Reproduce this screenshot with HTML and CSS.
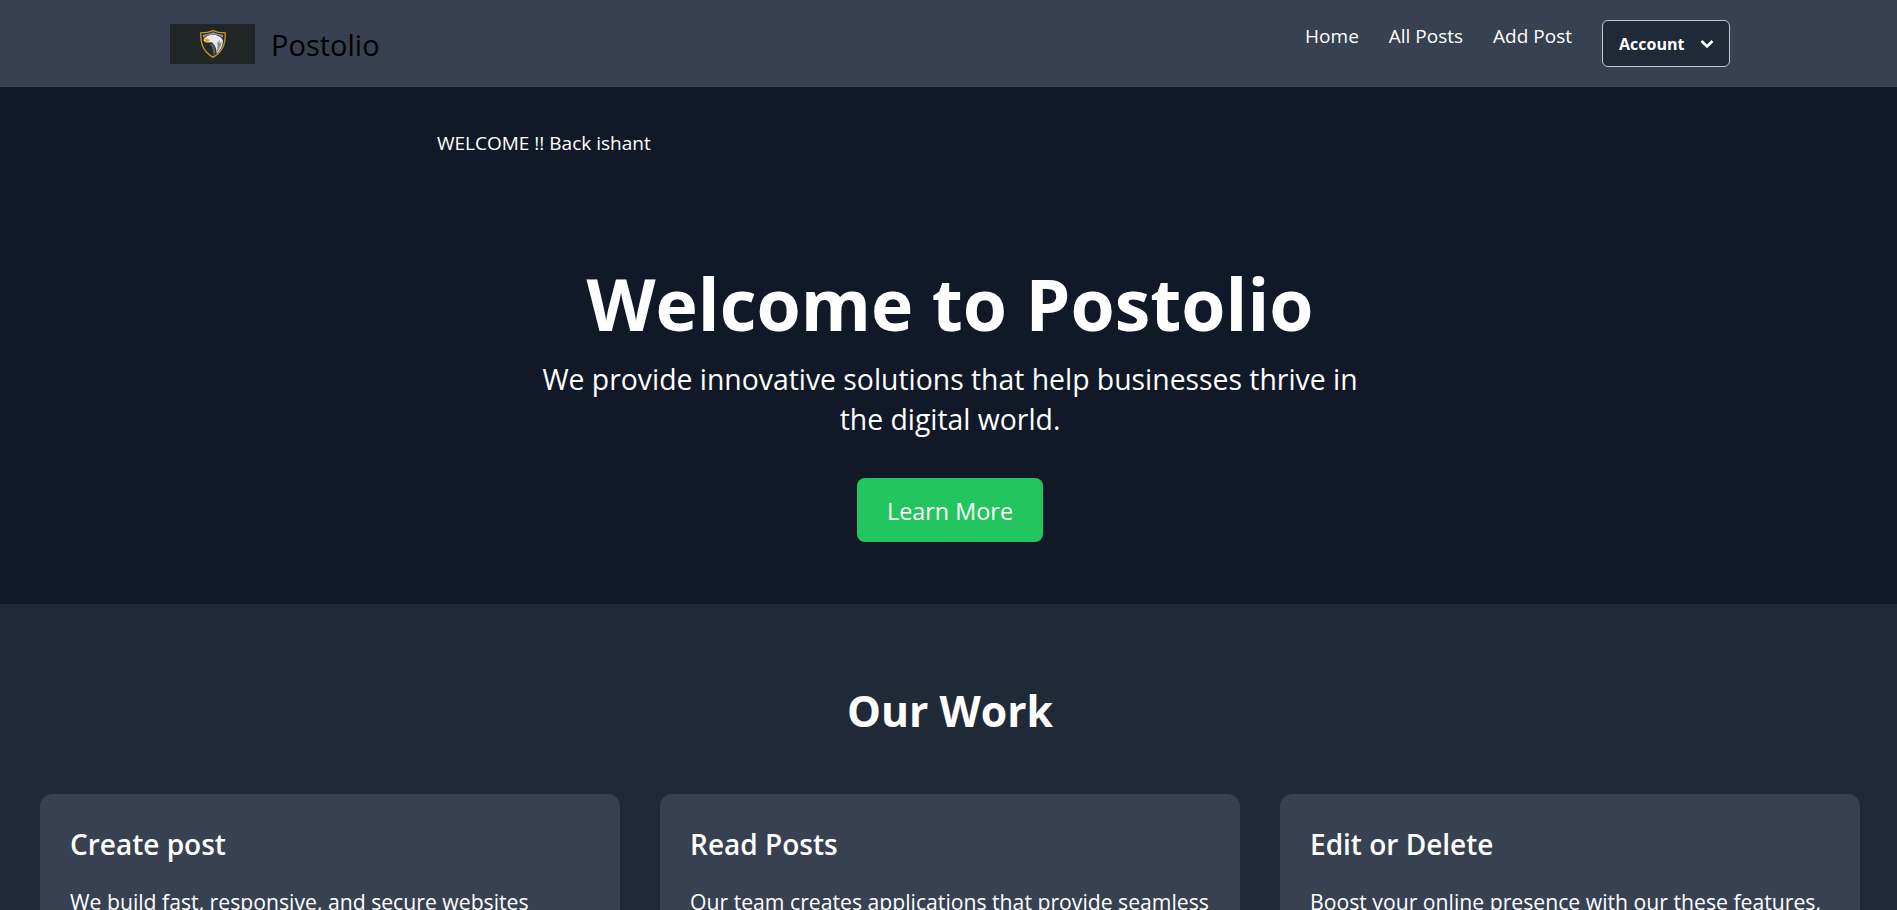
FILE: index.html
```html
<!DOCTYPE html>
<html lang="en">
<head>
    <meta charset="UTF-8">
    <meta name="viewport" content="width=device-width, initial-scale=1.0">
    <title>Postolio</title>
    <link rel="stylesheet" href="styles.css">
</head>
<body>
    <header class="site-header">
        <div class="brand">
            <div class="brand-logo">
                <svg width="26" height="28" viewBox="0 0 78 85">
                    <path d="M39 2 C50 7 64 9 76 9 C77 35 74 62 39 83 C4 62 1 35 2 9 C14 9 28 7 39 2Z" fill="#23282a" stroke="#c8952f" stroke-width="4"/>
                    <path d="M8 15 C22 13 30 10 39 7 C48 10 58 13 70 15 L69 24 C58 13 38 11 20 17 L9 24Z" fill="#8e9294"/>
                    <path d="M10 31 C16 17 34 12 50 16 C60 19 66 25 69 31 C70 46 62 62 50 71 C50 58 46 46 36 37 L22 38 L14 36Z" fill="#e9ebeb"/>
                    <path d="M36 40 C44 46 48 58 46 72 L40 77 C40 64 38 52 30 44Z" fill="#585c5e"/>
                    <path d="M50 32 C54 44 54 56 50 68 C58 60 64 48 66 34 L60 42 L58 28 L54 40Z" fill="#83888a"/>
                    <path d="M9 29 L22 26 L30 30 L24 37 L13 37 L16 33Z" fill="#eaa62c"/>
                </svg>
            </div>
            <span class="brand-name">Postolio</span>
        </div>
        <nav class="main-nav">
            <a href="#">Home</a>
            <a href="#">All Posts</a>
            <a href="#">Add Post</a>
            <button type="button" class="account-btn">
                Account
                <svg width="14" height="10" viewBox="0 0 14 10"><path d="M1.5 2 L7 7.5 L12.5 2" fill="none" stroke="#fff" stroke-width="2.6"/></svg>
            </button>
        </nav>
    </header>

    <section class="hero">
        <p class="greeting">WELCOME !! Back ishant</p>
        <div class="hero-body">
            <h1>Welcome to Postolio</h1>
            <p class="hero-text">We provide innovative solutions that help businesses thrive in the digital world.</p>
            <a href="#" class="hero-btn">Learn More</a>
        </div>
    </section>

    <section class="work">
        <h2>Our Work</h2>
        <div class="work-grid">
            <div class="work-card">
                <h3>Create post</h3>
                <p>We build fast, responsive, and secure websites tailored to your needs.</p>
            </div>
            <div class="work-card">
                <h3>Read Posts</h3>
                <p>Our team creates applications that provide seamless user experiences.</p>
            </div>
            <div class="work-card">
                <h3>Edit or Delete</h3>
                <p>Boost your online presence with our these features, anytime you want.</p>
            </div>
        </div>
    </section>
</body>
</html>
```

FILE: styles.css
```css
* {
    box-sizing: border-box;
}

body {
    margin: 0;
    font-family: 'Open Sans', sans-serif;
    background-color: #1f2937;
    color: #fff;
}

.site-header {
    height: 87px;
    padding: 20px 167px 20px 170px;
    background-color: #374151;
    display: flex;
    justify-content: space-between;
    align-items: flex-start;
}

.brand {
    display: flex;
    align-items: center;
    gap: 16px;
    height: 48px;
}

.brand-logo {
    width: 85px;
    height: 40px;
    background-color: #1f2625;
    display: flex;
    align-items: center;
    justify-content: center;
}

.brand-name {
    font-size: 29px;
    font-weight: 500;
    color: #000;
}

.main-nav {
    display: flex;
    align-items: flex-start;
    gap: 30px;
    font-size: 19px;
}

.main-nav a {
    color: #fff;
    text-decoration: none;
    line-height: 32px;
}

.account-btn {
    width: 128px;
    height: 47px;
    display: flex;
    align-items: center;
    justify-content: space-between;
    padding: 1px 15px 0 16px;
    background-color: #1f2937;
    color: #fff;
    border: 1px solid #c4c8ce;
    border-radius: 6px;
    font-family: inherit;
    font-size: 16px;
    font-weight: 700;
}

.hero {
    height: 517px;
    background-color: #111827;
    padding-top: 42px;
}

.greeting {
    margin: 0 0 0 437px;
    font-size: 19px;
    line-height: 28px;
}

.hero-body {
    margin-top: 111px;
    padding-left: 3px;
    text-align: center;
}

.hero h1 {
    margin: 0;
    font-size: 71.5px;
    line-height: 72px;
    font-weight: 700;
}

.hero-text {
    width: 840px;
    margin: 19px auto 39px;
    font-size: 28.35px;
    line-height: 40px;
}

.hero-btn {
    display: inline-block;
    padding: 17px 30px 15px;
    background-color: #22c55e;
    color: #fff;
    border-radius: 8px;
    font-size: 23.4px;
    line-height: 32px;
    text-decoration: none;
}

.work {
    padding: 78px 37px 78px 40px;
}

.work h2 {
    margin: 0 0 56px;
    padding-top: 1px;
    height: 56px;
    text-align: center;
    font-size: 42.7px;
    line-height: 56px;
    font-weight: 700;
}

.work-grid {
    display: grid;
    grid-template-columns: repeat(3, 580px);
    gap: 40px;
}

.work-card {
    padding: 30px;
    background-color: #374151;
    border-radius: 12px;
}

.work-card h3 {
    margin: 0 0 22px;
    font-size: 28px;
    line-height: 40px;
    font-weight: 600;
}

.work-card p {
    margin: 0;
    font-size: 21.2px;
    line-height: 32px;
}
```
